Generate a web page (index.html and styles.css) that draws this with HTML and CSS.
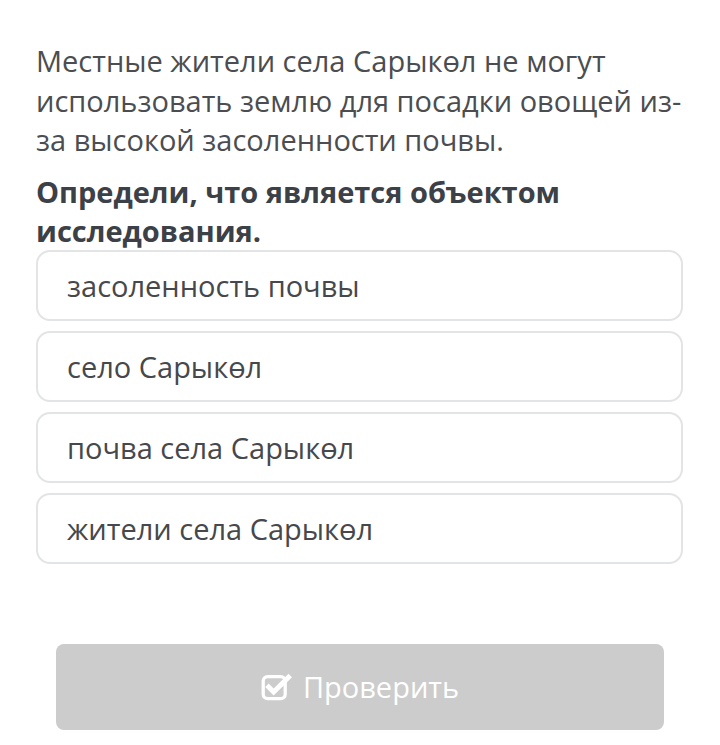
FILE: index.html
```html
<!DOCTYPE html>
<html lang="ru">
<head>
    <meta charset="UTF-8">
    <meta name="viewport" content="width=device-width, initial-scale=1.0">
    <title>Тест</title>
    <link rel="stylesheet" href="styles.css">
</head>
<body>
    <div class="task">
        <p class="task-text">Местные жители села Сарыкөл не могут использовать землю для посадки овощей из-за высокой засоленности почвы.</p>
        <p class="task-question">Определи, что является объектом исследования.</p>

        <!-- Answer options -->
        <div class="options">
            <div class="option">засоленность почвы</div>
            <div class="option">село Сарыкөл</div>
            <div class="option">почва села Сарыкөл</div>
            <div class="option">жители села Сарыкөл</div>
        </div>
    </div>

    <button class="check-btn" disabled>
        <svg class="check-icon" viewBox="0 0 30 28" width="33" height="31">
            <rect x="2" y="5" width="20" height="20" rx="4" fill="none" stroke="#fff" stroke-width="3"/>
            <path d="M7 14.5 L11.5 19 L25 5.5" fill="none" stroke="#fff" stroke-width="4.5" stroke-linecap="square" stroke-linejoin="miter"/>
        </svg>
        <span>Проверить</span>
    </button>
</body>
</html>
```

FILE: styles.css
```css
body {
    margin: 0;
    background-color: #fff;
    font-family: "Open Sans", "Noto Sans", sans-serif;
    color: #4b4d50;
}
.task {
    padding: 41px 37px 0 36px;
}
.task-text {
    margin: 0 -6px 0 0;
    font-size: 29px;
    line-height: 39.5px;
}
.task-question {
    margin: 12px 0 0 0;
    font-size: 29px;
    line-height: 39px;
    font-weight: bold;
    color: #3c4047;
}
.options {
    display: flex;
    flex-direction: column;
    gap: 10px;
}
.option {
    border: 2px solid #e3e4e5;
    border-radius: 14px;
    height: 67px;
    padding: 0 29px;
    display: flex;
    align-items: center;
    font-size: 29px;
    color: #46484c;
}
.check-btn {
    display: flex;
    align-items: center;
    justify-content: center;
    gap: 9px;
    margin: 80px 0 0 56px;
    width: 608px;
    height: 86px;
    border: none;
    border-radius: 8px;
    background-color: #cccccc;
    color: #fff;
    font-family: "Open Sans", "Noto Sans", sans-serif;
    font-size: 29px;
    padding: 0;
}
.check-icon {
    display: block;
}
```
